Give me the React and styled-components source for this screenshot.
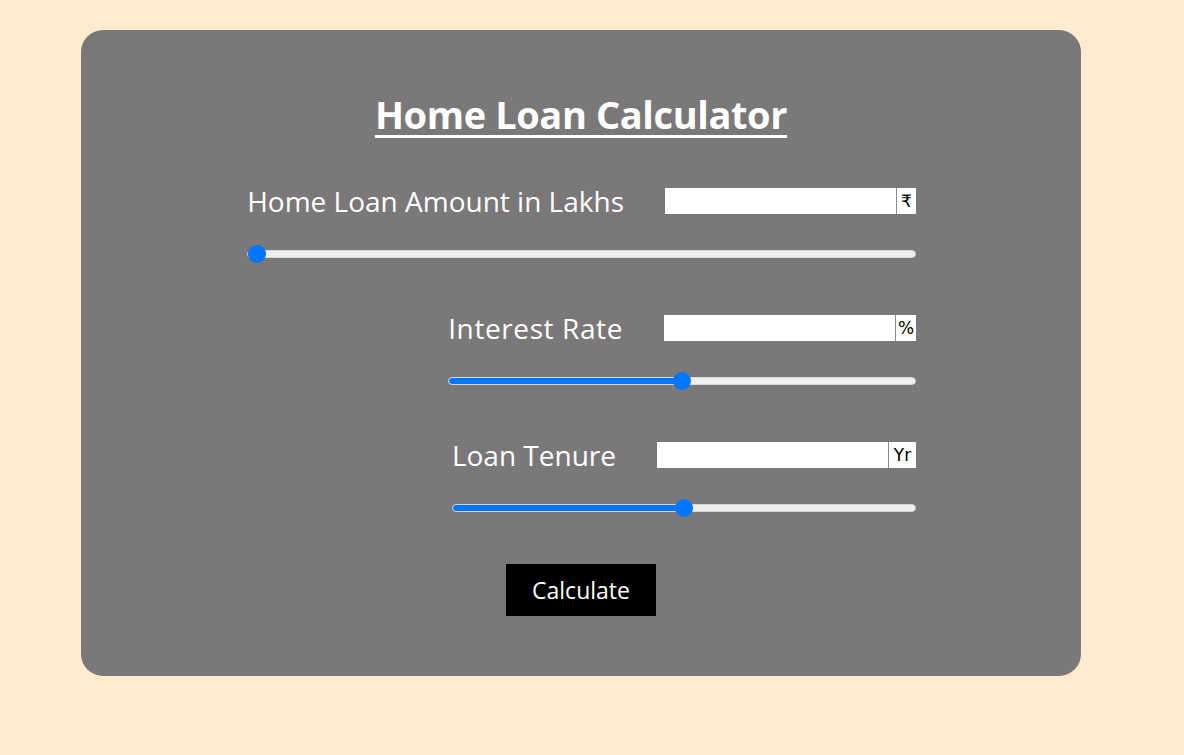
import React, { useState } from 'react';
import styled, { createGlobalStyle } from 'styled-components';

const GlobalStyle = createGlobalStyle`
    body {
        margin: 0;
        background-color: #ffebcd;
        font-family: "Open Sans", "Noto Sans", sans-serif;
    }
`;

const Page = styled.div`
    padding: 30px 0 0 81px;
    min-height: 755px;
    box-sizing: border-box;
`;

const Card = styled.div`
    width: 1000px;
    height: 646px;
    box-sizing: border-box;
    padding-top: 60px;
    background-color: #7a7879;
    border-radius: 22px;
    display: flex;
    flex-direction: column;
    align-items: center;
    color: #ffffff;
`;

const Title = styled.h1`
    margin: 0;
    font-size: 38px;
    line-height: 48px;
    letter-spacing: -0.4px;
    font-weight: bold;
    text-decoration: underline;
    text-decoration-thickness: 3px;
    text-underline-offset: 6px;
`;

const Fields = styled.div`
    width: 670px;
    margin-top: 50px;
    display: flex;
    flex-direction: column;
    align-items: flex-end;
    gap: 52px;
`;

const Field = styled.div`
    display: flex;
    flex-direction: column;
    gap: 31px;
`;

const Row = styled.div`
    display: flex;
    align-items: center;
    height: 26px;
`;

const Label = styled.label`
    font-size: 28px;
    line-height: 26px;
    margin-right: 41px;
    white-space: nowrap;
    letter-spacing: ${p => p.$spacing || 0}px;
`;

const InputBox = styled.div`
    display: flex;
    height: 26px;
    background-color: #ffffff;
`;

const TextInput = styled.input`
    width: 231px;
    height: 26px;
    box-sizing: border-box;
    border: none;
    outline: none;
    padding: 0 4px;
    font-size: 16px;
`;

const Unit = styled.span`
    display: flex;
    align-items: center;
    justify-content: center;
    width: ${p => p.$width}px;
    box-sizing: border-box;
    border-left: 1px solid #8a8a8a;
    color: #000000;
    font-size: 17px;
    font-family: "DejaVu Sans", "Noto Sans", sans-serif;
`;

const Slider = styled.input`
    -webkit-appearance: none;
    appearance: none;
    display: block;
    width: 100%;
    height: 18px;
    margin: 0;
    background: transparent;

    &::-webkit-slider-runnable-track {
        height: 8px;
        border-radius: 4px;
        border: 1px solid #d6d6d6;
        box-sizing: border-box;
        background: linear-gradient(
            to right,
            #0075ff calc(9px + (100% - 18px) * ${p => p.$pct}),
            #efefef 0
        );
    }

    &::-webkit-slider-thumb {
        -webkit-appearance: none;
        width: 18px;
        height: 18px;
        margin-top: -6px;
        border-radius: 50%;
        background: #0075ff;
        border: none;
    }
`;

const Button = styled.button`
    margin-top: 47px;
    width: 150px;
    height: 52px;
    border: none;
    background-color: #000000;
    color: #ffffff;
    font-family: "Open Sans", "Noto Sans", sans-serif;
    font-size: 23px;
    cursor: pointer;
`;

const fields = [
    { label: 'Home Loan Amount in Lakhs', unit: '₹', unitWidth: 20, spacing: 0, min: 0, max: 100, value: 0 },
    { label: 'Interest Rate', unit: '%', unitWidth: 21, spacing: 0.6, min: 0, max: 20, value: 10 },
    { label: 'Loan Tenure', unit: 'Yr', unitWidth: 28, spacing: 0, min: 0, max: 30, value: 15 },
];

export default function App() {
    const [values, setValues] = useState(fields.map(f => f.value));

    const onSlide = (i, v) => {
        const next = [...values];
        next[i] = Number(v);
        setValues(next);
    };

    return (
        <Page>
            <GlobalStyle />
            <Card>
                <Title>Home Loan Calculator</Title>
                <Fields>
                    {fields.map((f, i) => (
                        <Field key={f.label}>
                            <Row>
                                <Label $spacing={f.spacing}>{f.label}</Label>
                                <InputBox>
                                    <TextInput type="text" />
                                    <Unit $width={f.unitWidth}>{f.unit}</Unit>
                                </InputBox>
                            </Row>
                            <Slider
                                type="range"
                                min={f.min}
                                max={f.max}
                                value={values[i]}
                                $pct={(values[i] - f.min) / (f.max - f.min)}
                                onChange={e => onSlide(i, e.target.value)}
                            />
                        </Field>
                    ))}
                </Fields>
                <Button>Calculate</Button>
            </Card>
        </Page>
    );
}
